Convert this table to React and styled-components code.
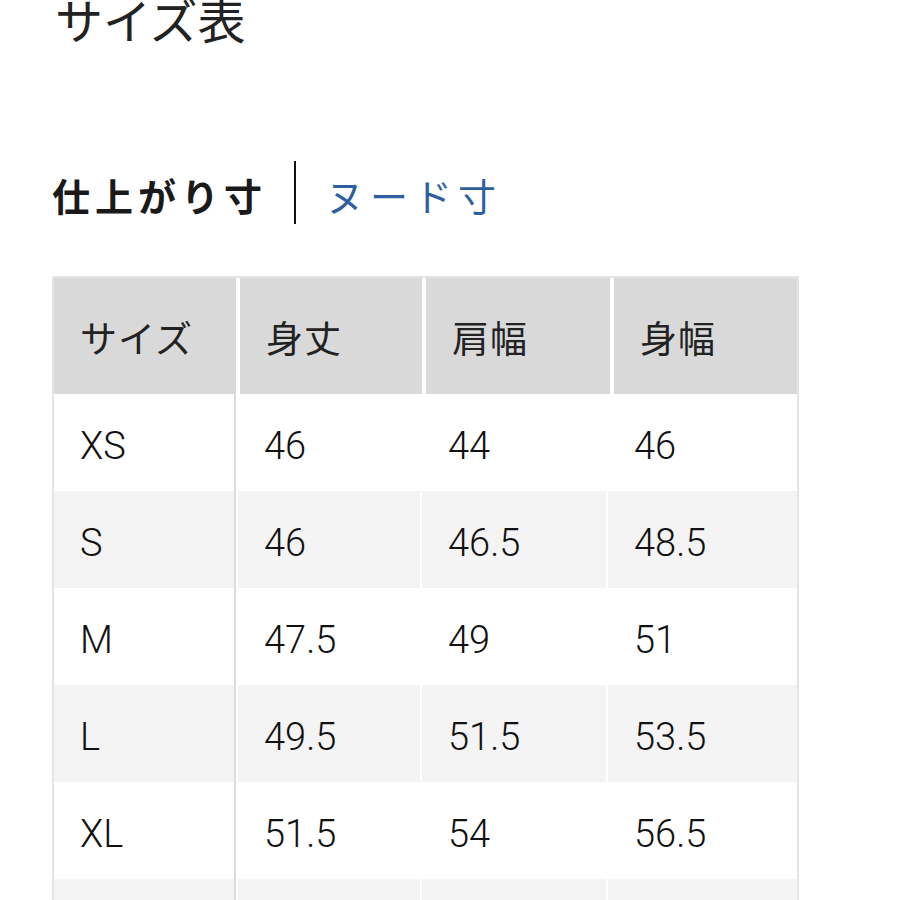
import React from "react";
import styled, { createGlobalStyle } from "styled-components";

const Global = createGlobalStyle`
  html, body { margin: 0; padding: 0; background: #ffffff; }
  body { font-family: Roboto, "Noto Sans CJK JP", sans-serif; color: #222; overflow: hidden; }
`;

const Page = styled.div`
  width: 900px;
  height: 900px;
  overflow: hidden;
  padding-left: 52px;
  box-sizing: border-box;
`;

const Title = styled.h1`
  margin: -9px 0 0 3px;
  font-family: "Noto Sans CJK JP", sans-serif;
  font-weight: 400;
  font-size: 48px;
  line-height: 54px;
  color: #222;
`;

const Tabs = styled.div`
  display: flex;
  align-items: center;
  margin-top: 115px;
  height: 64px;
`;

const Tab = styled.span`
  font-family: "Noto Sans CJK JP", sans-serif;
  font-size: 38px;
  line-height: 1;
  letter-spacing: ${(p) => (p.$active ? "5px" : "6px")};
  font-weight: ${(p) => (p.$active ? 700 : 400)};
  color: ${(p) => (p.$active ? "#1a1a1a" : "#2e5f9e")};
  padding-top: 6px;
`;

const Divider = styled.span`
  width: 2px;
  height: 63px;
  background: #111;
  margin: 0 30px 0 27px;
`;

const Table = styled.div`
  margin-top: 52px;
  width: 747px;
  border: 2px solid #e4e4e4;
  border-bottom: none;
  box-sizing: border-box;
  background: #fff;
`;

const Row = styled.div`
  display: grid;
  grid-template-columns: 182px 182px 184px 1fr;
  column-gap: ${(p) => (p.$head ? "4px" : "2px")};
  height: ${(p) => (p.$head ? "116px" : "97px")};
  background: #fff;
`;

const Cell = styled.div`
  display: flex;
  align-items: center;
  padding-left: 26px;
  padding-top: ${(p) => (p.$head ? "2px" : "6px")};
  font-family: ${(p) => (p.$head ? `"Noto Sans CJK JP", sans-serif` : `Roboto, "Noto Sans CJK JP", sans-serif`)};
  font-size: ${(p) => (p.$head ? "37px" : "38px")};
  font-weight: ${(p) => (p.$head ? 400 : 300)};
  color: ${(p) => (p.$head ? "#222" : "#111")};
  background: ${(p) => (p.$head ? "#d9d9d9" : p.$alt ? "#f4f4f4" : "#ffffff")};
  border-right: ${(p) => (p.$first && !p.$head ? "2px solid #dcdcdc" : "none")};
  letter-spacing: ${(p) => (p.$head ? "1px" : "0")};
`;

const headers = ["サイズ", "身丈", "肩幅", "身幅"];
const rows = [
  ["XS", "46", "44", "46"],
  ["S", "46", "46.5", "48.5"],
  ["M", "47.5", "49", "51"],
  ["L", "49.5", "51.5", "53.5"],
  ["XL", "51.5", "54", "56.5"],
  ["XXL", "53.5", "56.5", "59.5"],
];

export default function App() {
  return (
    <Page>
      <Global />
      <Title>サイズ表</Title>
      <Tabs>
        <Tab $active>仕上がり寸</Tab>
        <Divider />
        <Tab>ヌード寸</Tab>
      </Tabs>
      <Table>
        <Row $head>
          {headers.map((h, i) => (
            <Cell key={h} $head $first={i === 0}>{h}</Cell>
          ))}
        </Row>
        {rows.map((r, ri) => (
          <Row key={r[0]}>
            {r.map((v, i) => (
              <Cell key={i} $first={i === 0} $alt={ri % 2 === 1}>{ri === 5 ? "" : v}</Cell>
            ))}
          </Row>
        ))}
      </Table>
    </Page>
  );
}
